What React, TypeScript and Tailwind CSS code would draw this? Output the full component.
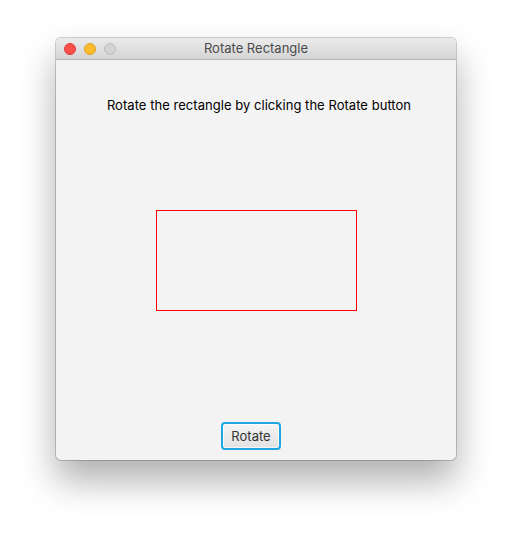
export default function App() {
  return (
    <div className="w-[512px] h-[534px] bg-white pt-[38px] pl-[56px]" style={{ fontFamily: 'Inter, "Liberation Sans", Arial, sans-serif' }}>
      <div className="w-[400px] h-[422px] rounded-[5px] bg-[#f3f3f3] flex flex-col overflow-hidden shadow-[0_0_0_1px_rgba(0,0,0,0.18),0_20px_36px_rgba(0,0,0,0.32)]">
        <div className="relative h-[22px] shrink-0 bg-gradient-to-b from-[#ebebeb] to-[#d5d5d5] border-b border-[#b4b4b4] flex items-center justify-center">
          <div className="absolute left-[8px] top-[5px] flex gap-[8px]">
            <div className="w-[12px] h-[12px] rounded-full bg-[#fc4f4a] border border-[#df3b36]" />
            <div className="w-[12px] h-[12px] rounded-full bg-[#fdbb2e] border border-[#dea123]" />
            <div className="w-[12px] h-[12px] rounded-full bg-[#d3d3d3] border border-[#bdbdbd]" />
          </div>
          <span className="text-[13px] text-[#4b4b4b]">Rotate Rectangle</span>
        </div>
        <div className="flex-1 flex flex-col items-center">
          <div className="mt-[37px] pl-[6px] text-[13px] text-black leading-[16px] tracking-[0.04px]">Rotate the rectangle by clicking the Rotate button</div>
          <div className="mt-[97px] ml-[1px] w-[201px] h-[101px] border border-[#ff0000]" />
          <div className="mt-[111px] mr-[10px] w-[60px] h-[28px] rounded-[4px] border-2 border-[#22a6e2] bg-gradient-to-b from-[#f4f4f4] to-[#e2e2e2] flex items-center justify-center shadow-[inset_0_0_0_1px_rgba(255,255,255,0.7)]">
            <span className="text-[13px] text-[#333] pt-[1px]">Rotate</span>
          </div>
        </div>
      </div>
    </div>
  );
}
